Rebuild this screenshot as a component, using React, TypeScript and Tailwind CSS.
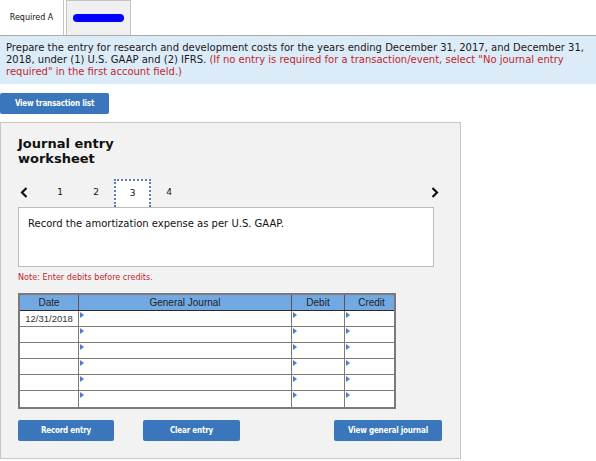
import React from 'react';

const cols = 'grid grid-cols-[59px_213px_53px_53px]';

const Marker: React.FC = () => (
  <span className="block w-0 h-0 mt-[1px] ml-[1px] border-y-[3px] border-y-transparent border-l-[4px] border-l-[#4a7fc4]" />
);

const Chevron: React.FC<{ dir: 'left' | 'right' }> = ({ dir }) => (
  <svg width="8" height="11" viewBox="0 0 8 11">
    <polyline
      points={dir === 'left' ? '6.5,1 2,5.5 6.5,10' : '1.5,1 6,5.5 1.5,10'}
      fill="none"
      stroke="#111"
      strokeWidth="2.2"
    />
  </svg>
);

const BlueButton: React.FC<{ label: string; className?: string }> = ({ label, className }) => (
  <button
    className={`h-[21px] bg-[#3a76bb] rounded-[2px] text-white text-[8px] font-bold tracking-[-0.2px] font-['DejaVu_Sans_Condensed',sans-serif] flex items-center justify-center ${className ?? ''}`}
  >
    {label}
  </button>
);

const App: React.FC = () => {
  const rows = [0, 1, 2, 3, 4, 5];

  return (
    <div className="w-[596px] h-[461px] bg-white text-[#111] font-['DejaVu_Sans',Verdana,sans-serif] overflow-hidden">
      {/* tabs */}
      <div className="h-[36px] flex border-b border-[#a9a9a9]">
        <div className="w-[64px] bg-white border-r border-[#c4c4c4] flex items-center justify-center text-[8px] pt-[1px]">
          Required A
        </div>
        <div className="ml-[2px] w-[65px] bg-[#f0f0f0] border-x border-t border-[#c4c4c4] flex items-center justify-center">
          <span className="block w-[51px] h-[8px] rounded-full bg-[#0000ff]" />
        </div>
      </div>

      {/* instructions */}
      <div className="bg-[#dcebf8] px-[6px] pt-[6px] pb-[5px] h-[48px] text-[10px] leading-[12px] text-[#1a1a1a]">
        Prepare the entry for research and development costs for the years ending December 31, 2017, and December 31,
        2018, under (1) U.S. GAAP and (2) IFRS.{' '}
        <span className="text-[#c0282d]">
          (If no entry is required for a transaction/event, select "No journal entry required" in the first account field.)
        </span>
      </div>

      <div className="mt-[9px]">
        <BlueButton label="View transaction list" className="w-[109px]" />
      </div>

      {/* worksheet panel */}
      <div className="mt-[8px] w-[461px] h-[337px] bg-[#f2f2f2] border border-[#c6c6c6] pl-[17px]">
        <div className="pt-[13px] text-[13px] leading-[15px] font-bold">
          Journal entry
          <br />
          worksheet
        </div>

        <div className="mt-[13px] w-[422px] h-[28px] flex items-center">
          <div className="w-[24px] pl-[2px] flex items-center pb-[2px]">
            <Chevron dir="left" />
          </div>
          <div className="w-[36px] text-center text-[9px]">1</div>
          <div className="w-[36px] text-center text-[9px]">2</div>
          <div className="w-[37px] h-[28px] bg-white border-2 border-b-0 border-dotted border-[#5b7db0] flex items-center justify-center text-[9px]">
            3
          </div>
          <div className="w-[36px] text-center text-[9px]">4</div>
          <div className="flex-1 flex justify-end pr-[1px] pb-[2px]">
            <Chevron dir="right" />
          </div>
        </div>

        <div className="w-[416px] h-[60px] bg-white border border-[#bdbdbd] pl-[9px] pt-[10px] text-[10px] leading-[12px]">
          Record the amortization expense as per U.S. GAAP.
        </div>

        <div className="mt-[5px] text-[9px] leading-[11px] text-[#c0282d] font-['DejaVu_Sans_Condensed',sans-serif]">
          Note: Enter debits before credits.
        </div>

        {/* journal table */}
        <div className="mt-[10px] w-[378px] border-2 border-[#7a7a7a] font-['Liberation_Sans',Arial,sans-serif] text-[10px]">
          <div className={`${cols} h-[16px] bg-[#72a9e3] border-b border-[#2a2a2a] text-[#222] leading-[15px]`}>
            <div className="text-center border-r border-[#555]">Date</div>
            <div className="text-center border-r border-[#555]">General Journal</div>
            <div className="text-center border-r border-[#555]">Debit</div>
            <div className="text-center">Credit</div>
          </div>
          {rows.map((r) => (
            <div key={r} className={`${cols} h-[16px] bg-white ${r < rows.length - 1 ? 'border-b border-[#7a7a7a]' : ''}`}>
              <div className="border-r border-[#7a7a7a] text-center text-[9.5px] leading-[15px] text-[#333]">
                {r === 0 ? '12/31/2018' : ''}
              </div>
              <div className="border-r border-[#7a7a7a]">
                <Marker />
              </div>
              <div className="border-r border-[#7a7a7a]">
                <Marker />
              </div>
              <div>
                <Marker />
              </div>
            </div>
          ))}
        </div>

        <div className="mt-[11px] flex">
          <BlueButton label="Record entry" className="w-[96px]" />
          <BlueButton label="Clear entry" className="w-[97px] ml-[29px]" />
          <BlueButton label="View general journal" className="w-[108px] ml-[94px]" />
        </div>
      </div>
    </div>
  );
};

export default App;
